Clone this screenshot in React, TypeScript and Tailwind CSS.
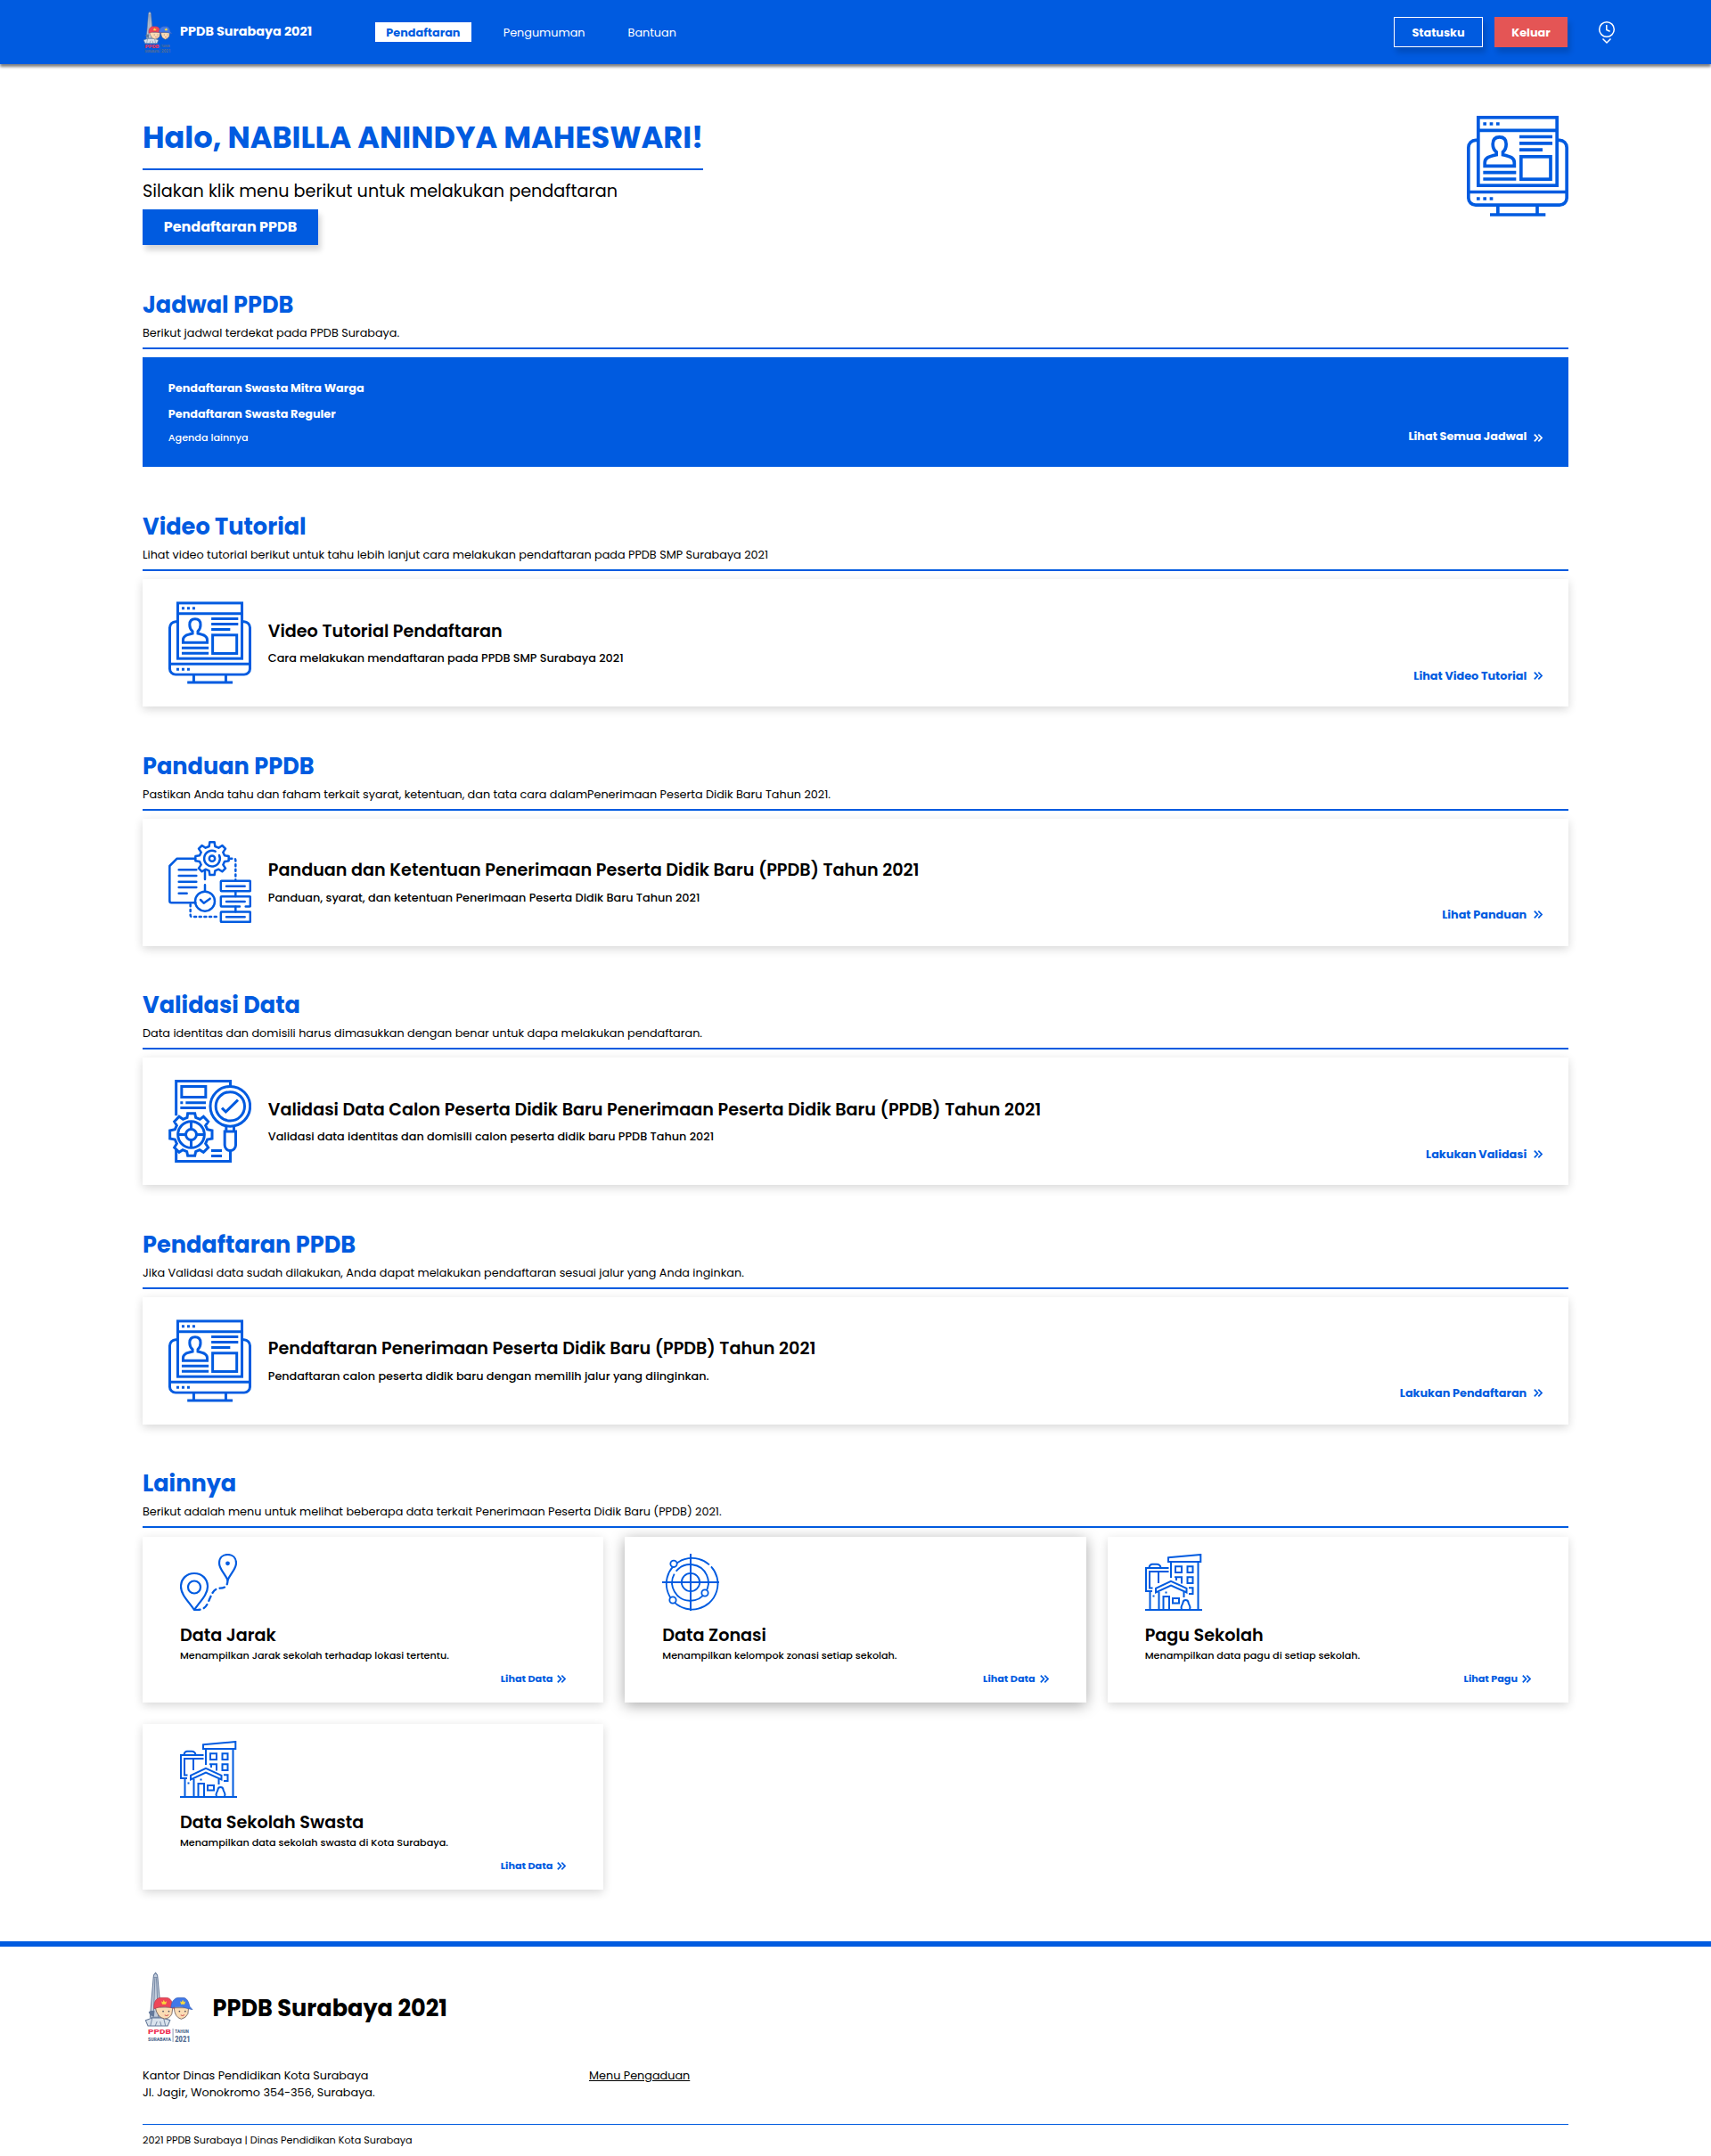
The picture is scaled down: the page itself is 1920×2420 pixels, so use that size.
import React from "react";

function Logo({ className }: { className: string }) {
  return (
    <svg className={`overflow-visible ${className}`} viewBox="13 17 156 237" fill="none" preserveAspectRatio="none">
      <path d="M47 18L53 26L54 34L66 168H29L40 34L41 26Z" fill="#c3cddb" stroke="#64799a" strokeWidth="3" />
      <path d="M40 34H54M45 36L40 168M50 36L56 168" stroke="#64799a" strokeWidth="2.5" />
      <path d="M14 178L36 170H72L95 178L87 197H22Z" fill="#d9e2ec" stroke="#64799a" strokeWidth="3" />
      <path d="M36 170L30 197M52 182L46 197M62 182L66 197M74 172L80 197" stroke="#64799a" strokeWidth="2.5" />
      <path d="M24 150Q32 142 44 147L42 165Q28 166 24 150Z" fill="#64799a" />
      <path d="M46 134H104L101 156Q94 173 76 173Q52 168 46 134Z" fill="#fbdcb4" stroke="#6b5d5d" strokeWidth="2.5" />
      <path d="M108 136H156L154 156Q148 170 132 174Q110 168 108 136Z" fill="#fbdcb4" stroke="#6b5d5d" strokeWidth="2.5" />
      <path d="M42 139C40 118 48 104 62 102H82C98 102 102 118 106 132L110 138Q90 134 78 132Q58 132 42 139Z" fill="#ef4658" stroke="#b63c4d" strokeWidth="2" />
      <path d="M98 136C98 118 108 103 122 102H140C154 104 158 124 160 132L169 142Q148 138 136 133Q120 131 98 136Z" fill="#4078e8" stroke="#3a62b4" strokeWidth="2" />
      <path d="M66 114L71 117L74 109L78 117L84 114L81 124H69Z" fill="#f8d83c" />
      <path d="M128 114L133 117L137 109L141 117L146 114L143 124H131Z" fill="#f8d83c" />
      <circle cx="72" cy="148" r="2.5" fill="#4b4b5c" />
      <circle cx="91" cy="148" r="2.5" fill="#4b4b5c" />
      <circle cx="126" cy="148" r="2.5" fill="#4b4b5c" />
      <circle cx="145" cy="148" r="2.5" fill="#4b4b5c" />
      <path d="M77 160Q84 165 90 159M130 160Q137 165 142 159" stroke="#d2605d" strokeWidth="3" />
      <g fontFamily="'Roboto'" fontWeight="900">
        <text x="22" y="225" fontSize="24" textLength="76" lengthAdjust="spacingAndGlyphs" fill="#f03355">PPDB</text>
        <text x="22" y="249" fontSize="18" textLength="76" lengthAdjust="spacingAndGlyphs" fill="#556d92">SURABAYA</text>
        <text x="111" y="221" fontSize="16" textLength="46" lengthAdjust="spacingAndGlyphs" fill="#556d92">TAHUN</text>
        <text x="111" y="250" fontSize="26" textLength="51" lengthAdjust="spacingAndGlyphs" fill="#556d92">2021</text>
      </g>
      <path d="M104.500 206V251" stroke="#556d92" strokeWidth="2" />
    </svg>
  );
}

function MonitorIcon({ className }: { className: string }) {
  return (
    <svg className={className} viewBox="0 0 342 339" fill="none" stroke="#005be0" strokeWidth="11">
      <rect x="38.500" y="5.500" width="265" height="229" />
      <path d="M33 49H309M38 82H30A25 25 0 0 0 5.500 107V277A24 24 0 0 0 29.500 300.500H312.500A24 24 0 0 0 336.500 277V107A25 25 0 0 0 312 82H304M5 256.500H337M104.500 300V333M237 300V333M78 333H265" />
      <path d="M177 70.500H288M177 92.500H288M177 114.500H255M55 191H166M55 213H166" />
      <rect x="182.500" y="137.500" width="99.500" height="76" />
      <path d="M60.500 169V158C60.500 142 73 137 99.500 131V122C90 114 87.500 106 87.500 95C87.500 79 96 71.500 110 71.500C124 71.500 132.500 79 132.500 95C132.500 106 130 114 121.500 122V131C148 137 160 142 160 158V169Z" />
      <path d="M55 27H66M77 27H88M99 27H110M33 279H44M55 279H66M77 279H88" strokeWidth="11" />
    </svg>
  );
}

function ProcessIcon({ className }: { className: string }) {
  return (
    <svg className={className} viewBox="0 0 279 279" fill="none" stroke="#005be0" strokeWidth="7.500" strokeLinecap="round" strokeLinejoin="round">
      <path d="M90 59H29L4 84V202Q4 208 10 208H91M123 98V129M123 148V168" />
      <path d="M35 97H94M35 117H94M35 137H94M35 156H94M35 176H62" />
      {/* Gear with eight teeth */}
      <path d="M137 18L139 4H155L157 18L169 23L181 15L192 26L184 38L189 49L203 51V67L189 69L184 80L192 92L181 103L169 95L157 100L155 114H139L137 100L125 95L113 103L102 92L110 80L105 69L91 67V51L105 49L110 38L102 26L113 15L125 23Z" />
      <path d="M171 48A26.500 26.500 0 1 1 158 35" />
      <circle cx="147" cy="59" r="9.500" />
      <path d="M208 59H220Q226 59 226 65V130" strokeDasharray="6 11" />
      <rect x="176.500" y="134.500" width="99" height="34" rx="2" />
      <path d="M240 220.500H178.500Q176.500 220.500 176.500 218V188.500Q176.500 186.500 179 186.500H273Q275.500 186.500 275.500 189V218Q275.500 220.500 273 220.500H260" />
      <rect x="176.500" y="238.500" width="99" height="34" rx="2" />
      <path d="M195 152H257M195 204H257M195 255.500H257M226 169V186M226 221V238" />
      <circle cx="123" cy="203" r="33" />
      <path d="M108 198L119 209L140 194" />
      <path d="M74 214V250Q74 255 80 255H172" strokeDasharray="6 11" />
    </svg>
  );
}

function ValidationIcon({ className }: { className: string }) {
  return (
    <svg className={className} viewBox="0 0 279 279" fill="none" stroke="#005be0" strokeWidth="9">
      <path d="M26 121V4.500H208.500V22M26 236V274.500H208.500V238" />
      <rect x="44.500" y="22.500" width="81" height="36" />
      <path d="M40 77H49M58 77H126M40 94.500H126M144 238.500H180M144 256.500H180" />
      <circle cx="208" cy="89.500" r="67" />
      <circle cx="208" cy="89.500" r="48.500" />
      <path d="M180 95L193 108L234 68M194.500 156V172M220.500 156V172" />
      <path d="M189.500 174H226.500V220A18.500 18.500 0 0 1 189.500 220Z" />
      <path d="M63 127L65 113H89L92 127L106 133L118 124L134 141L125 154L131 167L147 171V198L131 201L125 215L134 228L118 244L105 236L92 242L89 256H65L62 242L48 236L36 244L20 228L28 215L22 201L5 198V171L22 167L28 154L20 141L36 124L49 133Z" fill="#fff" />
      <circle cx="76.500" cy="184.500" r="44.500" />
      <circle cx="76.500" cy="184.500" r="18" />
      <path d="M76.500 140V166M76.500 203V229M32 184.500H58M95 184.500H121" />
    </svg>
  );
}

function RouteIcon() {
  return (
    <svg className="h-16 w-16" viewBox="0 0 64 64" fill="none" stroke="#005be0" strokeWidth="2.200">
      <path d="M16 63C10 54 1 46 1 37C1 28 7.500 22 16 22C24.500 22 31 28 31 37C31 46 22 54 16 63Z" />
      <circle cx="16" cy="37.500" r="7" />
      <path d="M53.500 29.500C50 22 44 17 44 10.500C44 4.500 48 1 53.500 1C59 1 63 4.500 63 10.500C63 17 57 22 53.500 29.500Z" />
      <circle cx="53.500" cy="10.800" r="2.400" fill="#005be0" stroke="none" />
      <path d="M17 63C30 64 31 55 34 49C37 42 39 39 45 38.700C51 38.500 53.500 36 53.500 29" strokeWidth="2.300" strokeLinecap="round" strokeDasharray="5.500 4.500" />
    </svg>
  );
}

function RadarIcon() {
  return (
    <svg className="h-16 w-16" viewBox="0 0 192 192" fill="none" stroke="#005be0" strokeWidth="5.500">
      <path d="M159 37A86.500 86.500 0 1 0 165 43" />
      <path d="M41 68A61 61 0 1 0 47 59" />
      <circle cx="96" cy="96" r="30.500" />
      <path d="M96 0V192M0 96H192" strokeWidth="6" />
      <circle cx="39" cy="34" r="11" fill="#fff" />
      <circle cx="36" cy="156" r="11" fill="#fff" />
      <circle cx="144" cy="132" r="11" fill="#fff" />
    </svg>
  );
}

function SchoolIcon() {
  return (
    <svg className="h-16 w-16" viewBox="0 0 64 64" fill="none" stroke="#005be0" strokeWidth="2">
      <path d="M0 63H64M29 27V9M59.500 9V63" />
      <path d="M26 4.300L62.300 1V9H26Z" />
      <path d="M34 14.300H41V21H34ZM47.500 14.300H53.500V21H47.500ZM47.500 26.300H53.500V33H47.500ZM33 26.300H41V33.500M35 26.300V30M49 38.300H53.500V45H49" />
      <path d="M26.500 16H1V42H8M26.500 20H5V38.500H8.500M15 20V33M5.500 42V63M4.500 15.500C5 12.500 6 11.700 8 11.700H13C15.500 11.700 17 13 17.500 15.500" />
      <path d="M29 30.800L46.500 38.800V43.500L29 35.500L12 43.500V38.800Z" />
      <path d="M15.500 43V63M43.500 43V49M20.500 63V48H27V63M31 50H38V55.500H31Z" />
      <path d="M41 63C39 58 42.500 57.500 42.500 54.500C43 51 48 51 48.500 54.500C48.500 57.500 52 58 50 63Z" />
      <path d="M22.500 43.500H24.500M8.500 47.500H10.500" />
    </svg>
  );
}

function Chevrons({ className }: { className: string }) {
  return (
    <svg className={className} viewBox="0 0 10 9" fill="none" stroke="currentColor" strokeWidth="1.700">
      <path d="M0.800 0.700L4.500 4.500L0.800 8.300M5.300 0.700L9 4.500L5.300 8.300" />
    </svg>
  );
}

function SectionHeader({ title, text }: { title: string; text: string }) {
  return (
    <div className="border-b-2 border-[#005be0] pb-[7px]">
      <h2 className="text-[25.6px] leading-[38px] font-bold text-[#005be0]">{title}</h2>
      <p className="mt-[3px] text-[12.8px] leading-[19.1px]">{text}</p>
    </div>
  );
}

const cardShadow = "shadow-[0_3px_10px_rgba(0,0,0,0.16)]";

interface FeatureProps {
  heading: string;
  text: string;
  icon: React.ReactNode;
  title: string;
  detail: string;
  action: string;
}

function Feature({ heading, text, icon, title, detail, action }: FeatureProps) {
  return (
    <section className="h-[268.5px]">
      <SectionHeader title={heading} text={text} />
      <div className={`mt-[9px] flex h-[143px] items-center pl-[28.8px] pr-[28.8px] ${cardShadow}`}>
        {icon}
        <div className="ml-[19px] grow">
          <h3 className="pt-[0.200px] text-[19.2px] leading-[28.8px] font-semibold">{title}</h3>
          <p className="mt-[5.800px] text-[12.8px] leading-[19.2px] font-medium">{detail}</p>
        </div>
        <a className="mb-[25px] flex items-center gap-[8px] self-end text-[12.8px] leading-[19.2px] font-bold text-[#005be0]">
          {action}
          <Chevrons className="h-[9px] w-[10px]" />
        </a>
      </div>
    </section>
  );
}

function SmallCard({ icon, title, text, action, raised }: { icon: React.ReactNode; title: string; text: string; action: string; raised?: boolean }) {
  return (
    <div className={`h-[186px] px-[42px] pt-[19.2px] ${raised ? "shadow-[0_3px_15px_rgba(0,0,0,0.35)]" : cardShadow}`}>
      {icon}
      <h3 className="mt-[13.6px] text-[19.2px] leading-[28.8px] font-semibold">{title}</h3>
      <p className="text-[11.2px] leading-[16.8px] font-medium">{text}</p>
      <a className="mt-[8.400px] flex items-center justify-end gap-[5px] text-[11.2px] leading-[16.8px] font-bold text-[#005be0]">
        {action}
        <Chevrons className="h-[9px] w-[10px]" />
      </a>
    </div>
  );
}

const features: Omit<FeatureProps, "icon">[] = [
  {
    heading: "Video Tutorial",
    text: "Lihat video tutorial berikut untuk tahu lebih lanjut cara melakukan pendaftaran pada PPDB SMP Surabaya 2021",
    title: "Video Tutorial Pendaftaran",
    detail: "Cara melakukan mendaftaran pada PPDB SMP Surabaya 2021",
    action: "Lihat Video Tutorial",
  },
  {
    heading: "Panduan PPDB",
    text: "Pastikan Anda tahu dan faham terkait syarat, ketentuan, dan tata cara dalamPenerimaan Peserta Didik Baru Tahun 2021.",
    title: "Panduan dan Ketentuan Penerimaan Peserta Didik Baru (PPDB) Tahun 2021",
    detail: "Panduan, syarat, dan ketentuan Penerimaan Peserta Didik Baru Tahun 2021",
    action: "Lihat Panduan",
  },
  {
    heading: "Validasi Data",
    text: "Data identitas dan domisili harus dimasukkan dengan benar untuk dapa melakukan pendaftaran.",
    title: "Validasi Data Calon Peserta Didik Baru Penerimaan Peserta Didik Baru (PPDB) Tahun 2021",
    detail: "Validasi data identitas dan domisili calon peserta didik baru PPDB Tahun 2021",
    action: "Lakukan Validasi",
  },
  {
    heading: "Pendaftaran PPDB",
    text: "Jika Validasi data sudah dilakukan, Anda dapat melakukan pendaftaran sesuai jalur yang Anda inginkan.",
    title: "Pendaftaran Penerimaan Peserta Didik Baru (PPDB) Tahun 2021",
    detail: "Pendaftaran calon peserta didik baru dengan memilih jalur yang diinginkan.",
    action: "Lakukan Pendaftaran",
  },
];

const iconSize = "h-[93px] w-[93px] shrink-0";
const featureIcons = [
  <MonitorIcon className={iconSize} />,
  <ProcessIcon className={iconSize} />,
  <ValidationIcon className={iconSize} />,
  <MonitorIcon className={iconSize} />,
];

export default function App() {
  return (
    <div className="h-[2420px] bg-white font-['Poppins','Inter',sans-serif] text-black">
      <header className="relative flex h-[72px] items-center bg-[#005be0] pl-[161px] text-[12.8px] leading-[19.2px] text-white shadow-[0_3px_3px_rgba(0,0,0,0.5)]">
        <Logo className="h-[47px] w-[32px]" />
        <span className="ml-[9px] w-[219px] text-[14.4px] font-bold">PPDB Surabaya 2021</span>
        <nav className="flex">
          <a className="h-[22px] bg-white px-[12.300px] leading-[23px] font-bold text-[#005be0]">Pendaftaran</a>
          <a className="ml-9 leading-[23px]">Pengumuman</a>
          <a className="ml-12 leading-[23px]">Bantuan</a>
        </nav>
        <div className="ml-auto flex font-bold">
          <button className="h-[34px] w-[100px] border border-white pt-px shadow-[3px_6px_6px_rgba(0,0,0,0.16)]">Statusku</button>
          <button className="ml-[13px] h-[34px] w-[82px] bg-[#e45555] pt-px shadow-[3px_6px_6px_rgba(0,0,0,0.16)]">Keluar</button>
        </div>
        <svg className="mr-[107px] ml-[34px] h-[27px] w-5" viewBox="0 0 20 27" fill="none" stroke="#fff" strokeWidth="1.500">
          <circle cx="10" cy="10" r="8.300" />
          <path d="M9.800 5V10.500L13.600 12.300M5.500 20.500L10 25L14.500 20.500" />
        </svg>
      </header>

      <main className="mx-auto w-[1600px]">
        <section className="flex h-[251px] justify-between pt-[58px]">
          <div>
            <h1 className="border-b-2 border-[#005be0] pb-[8.600px] text-[33.6px] leading-[50.4px] font-bold text-[#005be0]">Halo, NABILLA ANINDYA MAHESWARI!</h1>
            <p className="mt-[10px] text-[19.2px] leading-[28.8px]">Silakan klik menu berikut untuk melakukan pendaftaran</p>
            <button className="mt-[5px] h-10 w-[197px] bg-[#005be0] text-base font-bold text-white shadow-[3px_6px_6px_rgba(0,0,0,0.16)]">Pendaftaran PPDB</button>
          </div>
          <MonitorIcon className="h-[113px] w-[114px]" />
        </section>

        <section className="h-[249px]">
          <SectionHeader title="Jadwal PPDB" text="Berikut jadwal terdekat pada PPDB Surabaya." />
          <div className="mt-[9px] flex h-[123px] justify-between bg-[#005be0] px-[28.8px] pt-[25px] text-[12.8px] leading-[19px] font-bold text-white">
            <div>
              <p>Pendaftaran Swasta Mitra Warga</p>
              <p className="mt-[10px]">Pendaftaran Swasta Reguler</p>
              <p className="mt-[8.500px] text-[11.2px] leading-[17px] font-medium">Agenda lainnya</p>
            </div>
            <a className="mb-[25px] flex items-center gap-[8px] self-end">
              Lihat Semua Jadwal
              <Chevrons className="mt-[3px] h-[9px] w-[10px]" />
            </a>
          </div>
        </section>

        {features.map((feature, i) => (
          <Feature key={feature.heading} {...feature} icon={featureIcons[i]} />
        ))}

        <section className="h-[533px]">
          <SectionHeader title="Lainnya" text="Berikut adalah menu untuk melihat beberapa data terkait Penerimaan Peserta Didik Baru (PPDB) 2021." />
          <div className="mt-[9.800px] grid grid-cols-3 gap-6">
            <SmallCard icon={<RouteIcon />} title="Data Jarak" text="Menampilkan Jarak sekolah terhadap lokasi tertentu." action="Lihat Data" />
            <SmallCard raised icon={<RadarIcon />} title="Data Zonasi" text="Menampilkan kelompok zonasi setiap sekolah." action="Lihat Data" />
            <SmallCard icon={<SchoolIcon />} title="Pagu Sekolah" text="Menampilkan data pagu di setiap sekolah." action="Lihat Pagu" />
            <SmallCard icon={<SchoolIcon />} title="Data Sekolah Swasta" text="Menampilkan data sekolah swasta di Kota Surabaya." action="Lihat Data" />
          </div>
        </section>
      </main>

      <footer className="border-t-6 border-[#005be0]">
        <div className="mx-auto w-[1600px] pt-[29px]">
          <div className="flex items-center">
            <Logo className="ml-[3px] h-[79px] w-[53px]" />
            <span className="ml-[22.500px] text-[25.6px] leading-[38px] font-bold">PPDB Surabaya 2021</span>
          </div>
          <div className="mt-[27px] flex h-16 text-[12.8px] leading-[19.2px]">
            <p className="w-[501px]">
              Kantor Dinas Pendidikan Kota Surabaya
              <br />
              Jl. Jagir, Wonokromo 354-356, Surabaya.
            </p>
            <a className="underline">Menu Pengaduan</a>
          </div>
          <p className="border-t border-[#005be0] pt-[9px] text-[11.2px] leading-[16.8px]">2021 PPDB Surabaya | Dinas Pendidikan Kota Surabaya</p>
        </div>
      </footer>
    </div>
  );
}
